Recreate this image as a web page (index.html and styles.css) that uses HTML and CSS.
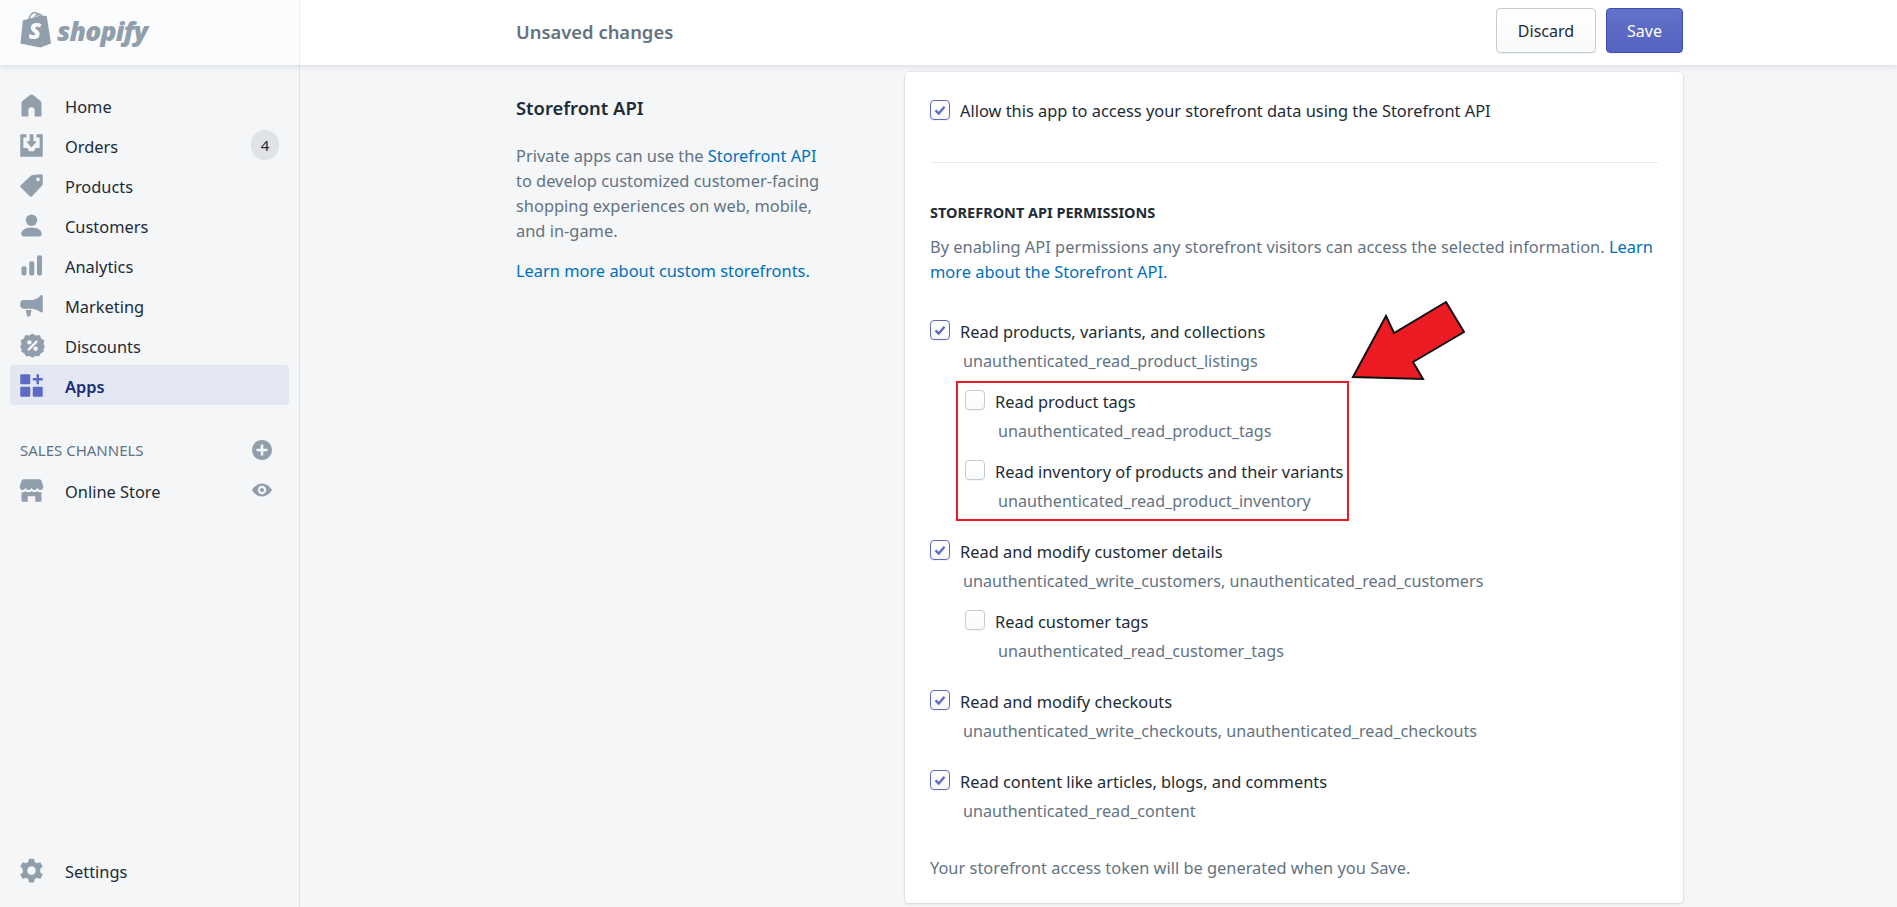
FILE: index.html
```html
<!DOCTYPE html>
<html>
  <head>
    <meta charset="UTF-8">
    <title>Shopify - Unsaved changes</title>
    <link rel="stylesheet" href="styles.css">
  </head>
  <body>
    <div class="topbar">
      <div class="brand">
        <svg class="brand-bag" viewBox="0 0 34 38">
          <path class="bag-body" d="M3 9.5 L22 4.5 L27.5 5 L32 33.5 L21 37.5 L0.5 33.5 Z"/>
          <path class="bag-handle" d="M9 10 C10 4 13 1.5 15.5 1.5 C18.5 1.5 19.5 4 19.5 8 M15 9 C15.5 5 17 3 19 3 C22 3 22.5 6 22.5 7"/>
          <text class="bag-letter" x="9" y="29">S</text>
        </svg>
        <span class="brand-name">shopify</span>
      </div>
      <div class="savebar">
        <span class="savebar-title">Unsaved changes</span>
        <div class="savebar-actions">
          <button class="btn">Discard</button>
          <button class="btn btn-primary">Save</button>
        </div>
      </div>
    </div>

    <div class="frame">
      <nav class="sidebar">
        <ul class="nav-list">
          <li class="nav-item">
            <svg class="nav-icon" viewBox="0 0 20 20"><path d="M10 1.2 C9.4 1.2 8.9 1.5 8.5 1.8 L3 6.2 C2.3 6.8 2 7.5 2 8.4 V17.8 C2 18.4 2.5 18.8 3 18.8 H7.5 V13.8 A2.5 2.5 0 0 1 12.5 13.8 V18.8 H17 C17.5 18.8 18 18.4 18 17.8 V8.4 C18 7.5 17.7 6.8 17 6.2 L11.5 1.8 C11.1 1.5 10.6 1.2 10 1.2 Z"/></svg>
            <span class="nav-label">Home</span>
          </li>
          <li class="nav-item">
            <svg class="nav-icon" viewBox="0 0 20 20"><path d="M1 1 H6 V3.5 H3.5 V12 H6.8 L8 14.5 H12 L13.2 12 H16.5 V3.5 H14 V1 H19 V19 H1 Z"/><path d="M8.5 1 H11.5 V6.5 H14.2 L10 11.5 L5.8 6.5 H8.5 Z"/></svg>
            <span class="nav-label">Orders</span>
            <span class="nav-badge">4</span>
          </li>
          <li class="nav-item">
            <svg class="nav-icon" viewBox="0 0 20 20"><path fill-rule="evenodd" d="M11 1.5 L17.8 1 C18.5 1 19 1.5 19 2.2 V8.8 C19 9.3 18.8 9.7 18.5 10 L10.5 18.6 C10 19.1 9.4 19.1 8.9 18.7 L1.3 11.3 C0.8 10.8 0.8 10.2 1.3 9.7 L9.8 2 C10.1 1.7 10.6 1.5 11 1.5 Z M15.2 3.6 A1.5 1.5 0 1 0 15.21 3.6 Z"/></svg>
            <span class="nav-label">Products</span>
          </li>
          <li class="nav-item">
            <svg class="nav-icon" viewBox="0 0 20 20"><circle cx="10" cy="5.8" r="4.6"/><path d="M10 11.5 C15 11.5 18.2 13.8 18.2 16.6 C18.2 18 17.2 18.8 16 18.8 H4 C2.8 18.8 1.8 18 1.8 16.6 C1.8 13.8 5 11.5 10 11.5 Z"/></svg>
            <span class="nav-label">Customers</span>
          </li>
          <li class="nav-item">
            <svg class="nav-icon" viewBox="0 0 20 20"><rect x="2" y="10.5" width="4" height="7.5" rx="1.6"/><rect x="8.2" y="6.5" width="4" height="11.5" rx="1.6"/><rect x="14.4" y="1.8" width="4" height="16.2" rx="1.6"/></svg>
            <span class="nav-label">Analytics</span>
          </li>
          <li class="nav-item">
            <svg class="nav-icon" viewBox="0 0 20 20"><path d="M18 1.5 C18.5 1.5 19 2 19 2.5 V14.5 C19 15 18.5 15.5 18 15.5 C17.6 15.5 17.4 15.4 17.2 15.2 C15.5 13.8 13.5 13 11 12.5 H3.5 C2.2 12.5 1 11.3 1 10 V8 C1 6.6 2.2 5.5 3.5 5.5 H11 C13.5 5 15.5 4 17.2 2 C17.4 1.7 17.6 1.5 18 1.5 Z"/><path d="M5.5 13.5 H10 L9.2 17.5 C9 18.5 8.3 19 7.5 18.8 C6.8 18.7 6.4 18.2 6.2 17.5 Z"/></svg>
            <span class="nav-label">Marketing</span>
          </li>
          <li class="nav-item">
            <svg class="nav-icon nav-icon-wide" viewBox="0 0 20 20"><path fill-rule="evenodd" d="M10 0.3 L12.6 1.9 L15.7 1.6 L16.9 4.4 L19.5 6 L18.8 9 L19.9 10.5 L18.8 13 L19 15 L16.6 16.2 L15.3 18.6 L12.4 18.3 L10 19.8 L7.6 18.3 L4.7 18.6 L3.4 16.2 L1 15 L1.2 13 L0.1 10.5 L1.2 9 L0.5 6 L3.1 4.4 L4.3 1.6 L7.4 1.9 Z M13 5.8 L14.3 7.1 L7.1 14.3 L5.8 13 Z M7.5 5.7 A1.8 1.8 0 1 0 7.51 5.7 Z M12.5 10.7 A1.8 1.8 0 1 0 12.51 10.7 Z"/></svg>
            <span class="nav-label">Discounts</span>
          </li>
          <li class="nav-item nav-item-active">
            <svg class="nav-icon" viewBox="0 0 20 20"><rect x="1" y="1" width="8" height="8" rx="0.8"/><rect x="1" y="11" width="8" height="8" rx="0.8"/><rect x="11" y="11" width="8" height="8" rx="0.8"/><path d="M14 1 H16 V4 H19 V6 H16 V9 H14 V6 H11 V4 H14 Z"/></svg>
            <span class="nav-label">Apps</span>
          </li>
        </ul>

        <div class="nav-section">
          <span>SALES CHANNELS</span>
          <svg class="nav-aside" viewBox="0 0 20 20"><path fill-rule="evenodd" d="M10 0 A10 10 0 1 0 10.01 0 Z M8.7 4.5 H11.3 V8.7 H15.5 V11.3 H11.3 V15.5 H8.7 V11.3 H4.5 V8.7 H8.7 Z"/></svg>
        </div>
        <ul class="nav-list">
          <li class="nav-item">
            <svg class="nav-icon" viewBox="0 0 20 20"><path d="M4 1 H16 C17 1 17.7 1.5 18 2.4 L19.5 7 C19.5 8.5 18.5 9.6 17.2 9.6 C16 9.6 15 8.8 14.8 7.6 C14.5 8.8 13.5 9.6 12.4 9.6 C11.2 9.6 10.3 8.8 10 7.6 C9.7 8.8 8.8 9.6 7.6 9.6 C6.5 9.6 5.5 8.8 5.2 7.6 C5 8.8 4 9.6 2.8 9.6 C1.5 9.6 0.5 8.5 0.5 7 L2 2.4 C2.3 1.5 3 1 4 1 Z"/><path d="M2 11.2 C3.3 11.6 4.5 11.4 5.3 10.6 C6.5 11.6 8.6 11.6 10 10.6 C11.4 11.6 13.5 11.6 14.7 10.6 C15.5 11.4 16.7 11.6 18 11.2 V18 C18 18.6 17.6 19 17 19 H13 V14.5 H7 V19 H3 C2.4 19 2 18.6 2 18 Z"/></svg>
            <span class="nav-label">Online Store</span>
            <svg class="nav-aside nav-aside-eye" viewBox="0 0 20 20"><path fill-rule="evenodd" d="M10 3.5 C15 3.5 18.5 7.5 20 10 C18.5 12.5 15 16.5 10 16.5 C5 16.5 1.5 12.5 0 10 C1.5 7.5 5 3.5 10 3.5 Z M10 5.8 A4.2 4.2 0 1 0 10.01 5.8 Z M10 8 A2 2 0 1 1 9.99 8 Z"/></svg>
          </li>
        </ul>

        <ul class="nav-list nav-list-bottom">
          <li class="nav-item">
            <svg class="nav-icon" viewBox="0 0 20 20"><path fill-rule="evenodd" d="M8 0.5 H12 L12.6 3.2 L14.4 4.2 L17 3.3 L19 6.7 L17 8.6 V11.4 L19 13.3 L17 16.7 L14.4 15.8 L12.6 16.8 L12 19.5 H8 L7.4 16.8 L5.6 15.8 L3 16.7 L1 13.3 L3 11.4 V8.6 L1 6.7 L3 3.3 L5.6 4.2 L7.4 3.2 Z M10 6.6 A3.4 3.4 0 1 0 10.01 6.6 Z"/></svg>
            <span class="nav-label">Settings</span>
          </li>
        </ul>
      </nav>

      <main class="content">
        <section class="intro">
          <h2 class="intro-title">Storefront API</h2>
          <p class="intro-text">
            Private apps can use the <a href="#">Storefront API</a>
            to develop customized customer-facing
            shopping experiences on web, mobile,
            and in-game.
          </p>
          <p class="intro-text"><a href="#">Learn more about custom storefronts.</a></p>
        </section>

        <section class="card">
          <label class="check check-top">
            <span class="box box-on"><svg viewBox="0 0 20 20"><path d="M5 10.5 L8.6 14 L15 6.5"/></svg></span>
            <span class="check-label">Allow this app to access your storefront data using the Storefront API</span>
          </label>

          <hr class="divider">

          <h3 class="card-heading">STOREFRONT API PERMISSIONS</h3>
          <p class="card-note">
            By enabling API permissions any storefront visitors can access the selected information. <a href="#">Learn more about the Storefront API.</a>
          </p>

          <div class="perm">
            <label class="check">
              <span class="box box-on"><svg viewBox="0 0 20 20"><path d="M5 10.5 L8.6 14 L15 6.5"/></svg></span>
              <span class="check-label">Read products, variants, and collections</span>
            </label>
            <div class="perm-code">unauthenticated_read_product_listings</div>
          </div>
          <div class="highlight">
            <div class="perm perm-sub">
              <label class="check">
                <span class="box"></span>
                <span class="check-label">Read product tags</span>
              </label>
              <div class="perm-code">unauthenticated_read_product_tags</div>
            </div>
            <div class="perm perm-sub">
              <label class="check">
                <span class="box"></span>
                <span class="check-label">Read inventory of products and their variants</span>
              </label>
              <div class="perm-code">unauthenticated_read_product_inventory</div>
            </div>
          </div>

          <div class="perm perm-gap">
            <label class="check">
              <span class="box box-on"><svg viewBox="0 0 20 20"><path d="M5 10.5 L8.6 14 L15 6.5"/></svg></span>
              <span class="check-label">Read and modify customer details</span>
            </label>
            <div class="perm-code">unauthenticated_write_customers, unauthenticated_read_customers</div>
          </div>
          <div class="nested">
            <div class="perm perm-sub">
              <label class="check">
                <span class="box"></span>
                <span class="check-label">Read customer tags</span>
              </label>
              <div class="perm-code">unauthenticated_read_customer_tags</div>
            </div>
          </div>

          <div class="perm perm-gap">
            <label class="check">
              <span class="box box-on"><svg viewBox="0 0 20 20"><path d="M5 10.5 L8.6 14 L15 6.5"/></svg></span>
              <span class="check-label">Read and modify checkouts</span>
            </label>
            <div class="perm-code">unauthenticated_write_checkouts, unauthenticated_read_checkouts</div>
          </div>

          <div class="perm perm-gap">
            <label class="check">
              <span class="box box-on"><svg viewBox="0 0 20 20"><path d="M5 10.5 L8.6 14 L15 6.5"/></svg></span>
              <span class="check-label">Read content like articles, blogs, and comments</span>
            </label>
            <div class="perm-code">unauthenticated_read_content</div>
          </div>

          <p class="card-foot">Your storefront access token will be generated when you Save.</p>
        </section>
      </main>
    </div>

    <svg class="arrow" viewBox="0 0 180 84">
      <polygon points="5,80 38,19 46,36 98,5 116,35 65,65 75,82"/>
    </svg>
  </body>
</html>
```

FILE: styles.css
```css
* {
  box-sizing: border-box;
}

html, body {
  height: 100%;
}

body {
  margin: 0;
  overflow: hidden;
  position: relative;
  background: #f4f6f8;
  color: #212b36;
  font-family: "Noto Sans", "Open Sans", sans-serif;
  font-size: 16.4px;
  line-height: 25px;
}

a {
  color: #006fbb;
  text-decoration: none;
}

/* top bar */
.topbar {
  display: flex;
  height: 65px;
  position: relative;
  z-index: 2;
  box-shadow: 0 1px 6px rgba(33, 43, 54, 0.14);
}

.brand {
  width: 300px;
  flex: none;
  display: flex;
  align-items: center;
  padding-left: 20px;
  background: #fbfcfd;
  border-right: 1px solid #eceff2;
}

.brand-bag {
  width: 33px;
  height: 37px;
  margin-top: -6px;
}

.bag-body {
  fill: #919eab;
}

.bag-handle {
  fill: none;
  stroke: #919eab;
  stroke-width: 1.4;
}

.bag-letter {
  fill: #fbfcfd;
  font-family: "Open Sans", sans-serif;
  font-weight: 800;
  font-style: italic;
  font-size: 23px;
}

.brand-name {
  margin-left: 4px;
  margin-top: -3px;
  color: #919eab;
  font-family: "Open Sans", sans-serif;
  font-weight: 800;
  font-style: italic;
  font-size: 26.5px;
  letter-spacing: -0.8px;
}

.savebar {
  flex: 1;
  display: flex;
  align-items: center;
  justify-content: space-between;
  padding: 0 214px 0 216px;
  background: #fff;
}

.savebar-title {
  margin-top: -2px;
  color: #637381;
  font-size: 18.4px;
  font-weight: 600;
}

.savebar-actions {
  display: flex;
  gap: 10px;
  margin-top: -4px;
}

.btn {
  height: 45px;
  width: 100px;
  padding: 2px 0 0;
  border: 1px solid #c4cdd5;
  border-radius: 4px;
  background: linear-gradient(#fff, #f9fafb);
  color: #212b36;
  font: inherit;
  font-size: 16px;
  box-shadow: 0 1px 0 rgba(22, 29, 37, 0.05);
}

.btn-primary {
  width: 77px;
  border-color: #3f4eae;
  background: linear-gradient(#6371c7, #5563c1);
  color: #fff;
}

/* sidebar */
.frame {
  display: flex;
  height: 842px;
}

.sidebar {
  width: 300px;
  flex: none;
  display: flex;
  flex-direction: column;
  padding: 20px 0 17px;
  border-right: 1px solid #dfe3e8;
}

.nav-list {
  list-style: none;
  margin: 0;
  padding: 0;
}

.nav-list-bottom {
  margin-top: auto;
}

.nav-item {
  display: flex;
  align-items: center;
  height: 40px;
  margin: 0 10px;
  padding: 0 10px 0 9px;
  border-radius: 4px;
}

.nav-label {
  padding-top: 2px;
}

.nav-icon {
  width: 25px;
  height: 25px;
  margin-right: 21px;
  flex: none;
  fill: #919eab;
}

.nav-icon-wide {
  margin: 0 20px 0 1px;
}

.nav-item-active {
  background: #e3e7f2;
  color: #202e78;
  font-weight: 600;
}

.nav-item-active .nav-icon {
  fill: #5c6ac4;
}

.nav-badge {
  margin-left: auto;
  width: 28px;
  height: 30px;
  border-radius: 15px;
  background: #dfe3e8;
  text-align: center;
  font-size: 15px;
  line-height: 30px;
}

.nav-section {
  display: flex;
  align-items: center;
  justify-content: space-between;
  height: 40px;
  margin-top: 25px;
  padding: 0 27px 0 20px;
  color: #637381;
  font-size: 15px;
}

.nav-aside {
  width: 20px;
  height: 20px;
  fill: #919eab;
}

.nav-aside-eye {
  margin-left: auto;
  margin-right: 7px;
}

/* content */
.content {
  flex: 1;
  display: flex;
  align-items: flex-start;
  padding: 7px 0 0 216px;
}

.intro {
  width: 389px;
  padding: 23px 75px 0 0;
}

.intro-title {
  margin: 0 0 23px;
  font-size: 18.4px;
  font-weight: 600;
}

.intro-text {
  margin: 0 0 15px;
  color: #637381;
}

.card {
  width: 778px;
  height: 831px;
  padding: 27px 25px 25px;
  background: #fff;
  border-radius: 4px;
  box-shadow: 0 0 0 1px rgba(63, 63, 68, 0.05), 0 1px 3px rgba(63, 63, 68, 0.15);
}

.check {
  display: flex;
  align-items: center;
  height: 25px;
}

.check-top .check-label {
  margin-top: -2px;
}

.box {
  width: 20px;
  height: 20px;
  flex: none;
  margin-top: -3px;
  margin-right: 10px;
  border: 1px solid #c4cdd5;
  border-radius: 4px;
  background: linear-gradient(#fff, #f9fafb);
  box-shadow: 0 1px 0 rgba(22, 29, 37, 0.05);
}

.box-on {
  border-color: #5c6ac4;
}

.box svg {
  display: block;
  width: 18px;
  height: 18px;
  fill: none;
  stroke: #5c6ac4;
  stroke-width: 2.6;
}

.divider {
  height: 1px;
  margin: 38px 0 0;
  border: 0;
  background: #e9ecef;
}

.card-heading {
  margin: 37px 0 0;
  font-size: 14.5px;
  font-weight: 700;
}

.card-note {
  margin: 9px 0 0;
  color: #637381;
}

.card-note + .perm {
  margin-top: 35px;
}

.perm-code {
  margin-top: 5px;
  padding-left: 33px;
  color: #637381;
  font-size: 16.15px;
}

.perm-sub + .perm-sub {
  margin-top: 15px;
}

.highlight {
  margin: 7px 0 0 26px;
  width: 393px;
  height: 140px;
  padding: 6px 0 0 7px;
  border: 2px solid #ed1c24;
  white-space: nowrap;
}

.nested {
  margin: 15px 0 0 35px;
}

.perm-gap {
  margin-top: 25px;
}

.highlight + .perm-gap {
  margin-top: 18px;
}

.card-foot {
  margin: 31px 0 0;
  color: #637381;
}

/* annotation arrow */
.arrow {
  position: absolute;
  left: 1348px;
  top: 297px;
  width: 180px;
  height: 84px;
  pointer-events: none;
}

.arrow polygon {
  fill: #ed1c24;
  stroke: #111;
  stroke-width: 2;
  stroke-linejoin: miter;
}
```
